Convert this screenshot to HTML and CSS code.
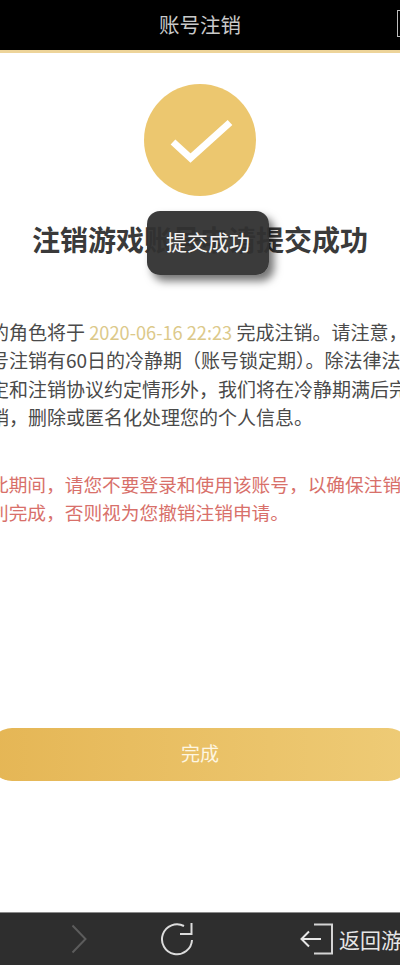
FILE: index.html
```html
<!DOCTYPE html>
<html lang="zh">
<head>
<meta charset="utf-8">
<title>账号注销</title>
<link rel="stylesheet" href="styles.css">
</head>
<body>
<div class="app">
  <header class="topbar">
    <span class="topbar-title">账号注销</span>
    <span class="topbar-box"></span>
  </header>
  <main class="content">
    <div class="badge">
      <svg viewBox="0 0 112 112" width="112" height="112">
        <circle cx="56" cy="56" r="56" fill="#ecc76f"/>
        <path d="M29 58 L46.5 74 L86 38.5" fill="none" stroke="#fff" stroke-width="7"/>
      </svg>
    </div>
    <h1 class="heading">注销游戏账号申请提交成功</h1>
    <div class="notes">
      <p class="note">的角色将于 <span class="date">2020-06-16 22:23</span> 完成注销。请注意，<br>号注销有60日的冷静期（账号锁定期）。除法律法<br>定和注销协议约定情形外，我们将在冷静期满后完<br>销，删除或匿名化处理您的个人信息。</p>
      <p class="note warn">此期间，请您不要登录和使用该账号，以确保注销<br>利完成，否则视为您撤销注销申请。</p>
    </div>
    <button class="done">完成</button>
    <div class="toast">提交成功</div>
  </main>
  <nav class="bottombar">
    <svg class="nav-forward" viewBox="0 0 16 30" width="16" height="30">
      <path d="M1.5 1.5 L14.5 15 L1.5 28.5" fill="none" stroke="#5c5c5c" stroke-width="2"/>
    </svg>
    <svg class="nav-refresh" viewBox="0 0 34 34" width="34" height="34">
      <path d="M24 4 A15 15 0 1 0 32 18" fill="none" stroke="#dcdcdc" stroke-width="2"/>
      <path d="M31.5 1 L31.5 12 L20 12" fill="none" stroke="#dcdcdc" stroke-width="2"/>
    </svg>
    <svg class="nav-exit" viewBox="0 0 34 32" width="34" height="32">
      <path d="M14 1.5 L32 1.5 L32 30.5 L14 30.5" fill="none" stroke="#d4d4d4" stroke-width="2"/>
      <path d="M1.5 16 L21 16 M9 8.5 L1.5 16 L9 23.5" fill="none" stroke="#e6e6e6" stroke-width="2"/>
    </svg>
    <span class="nav-label">返回游戏</span>
  </nav>
</div>
</body>
</html>
```
FILE: styles.css
```css
* { box-sizing: border-box; }
html, body { margin: 0; padding: 0; background: #fff; }
body { font-family: "Noto Sans CJK SC", "Noto Sans", sans-serif; }
.app {
  width: 400px;
  height: 970px;
  display: flex;
  flex-direction: column;
  overflow: hidden;
  position: relative;
}
.topbar {
  height: 53px;
  flex: none;
  background: #000;
  border-bottom: 3px solid #edd49a;
  padding-bottom: 3px;
  display: flex;
  align-items: center;
  justify-content: center;
  position: relative;
}
.topbar-title { font-size: 20.5px; color: #c9c9c9; line-height: 44px; }
.topbar-box {
  position: absolute;
  left: 397px;
  top: 10px;
  width: 20px;
  height: 27px;
  border: 1.5px solid #bdbdbd;
}
.content {
  flex: 1;
  position: relative;
  display: flex;
  flex-direction: column;
  align-items: center;
}
.badge { margin-top: 31px; height: 112px; flex: none; }
.heading {
  margin: 21px 0 0;
  height: 44px;
  font-size: 28px;
  line-height: 44px;
  font-weight: 700;
  color: #3a3a3a;
  white-space: nowrap;
}
.notes { align-self: flex-start; margin: 57px 0 0 -10px; width: 440px; }
.note {
  margin: 0 0 38px;
  font-size: 19px;
  line-height: 28.4px;
  color: #4a4a4a;
  white-space: nowrap;
}
.date { color: #dcc98a; font-size: 18.2px; }
.warn { color: #d8706a; font-size: 18.7px; }
.done {
  position: absolute;
  top: 675px;
  left: -10px;
  width: 420px;
  height: 53px;
  border: 0;
  border-radius: 22px;
  background: linear-gradient(90deg, #e5b655, #eecb76);
  color: #fdf6e2;
  font: inherit;
  font-size: 19px;
  line-height: 50px;
  padding: 0 0 3px;
}
.toast {
  position: absolute;
  left: 147px;
  top: 158px;
  width: 122px;
  height: 64px;
  border-radius: 13px;
  background: rgba(48, 48, 48, 0.95);
  color: #f2f2f2;
  font-size: 21px;
  line-height: 60px;
  text-align: center;
  white-space: nowrap;
  box-shadow: 5px 6px 8px rgba(0, 0, 0, 0.55);
}
.bottombar {
  flex: none;
  height: 53px;
  margin-bottom: 5px;
  background: #2e2e2e;
  border-top: 1px solid #8a8a8a;
  display: flex;
  align-items: center;
  white-space: nowrap;
  color: #e6e6e6;
}
.nav-forward { margin-left: 71px; flex: none; }
.nav-refresh { margin-left: 73px; flex: none; }
.nav-exit { margin-left: 106px; flex: none; margin-right: 5px; }
.nav-label { font-size: 21px; flex: none; }
```
